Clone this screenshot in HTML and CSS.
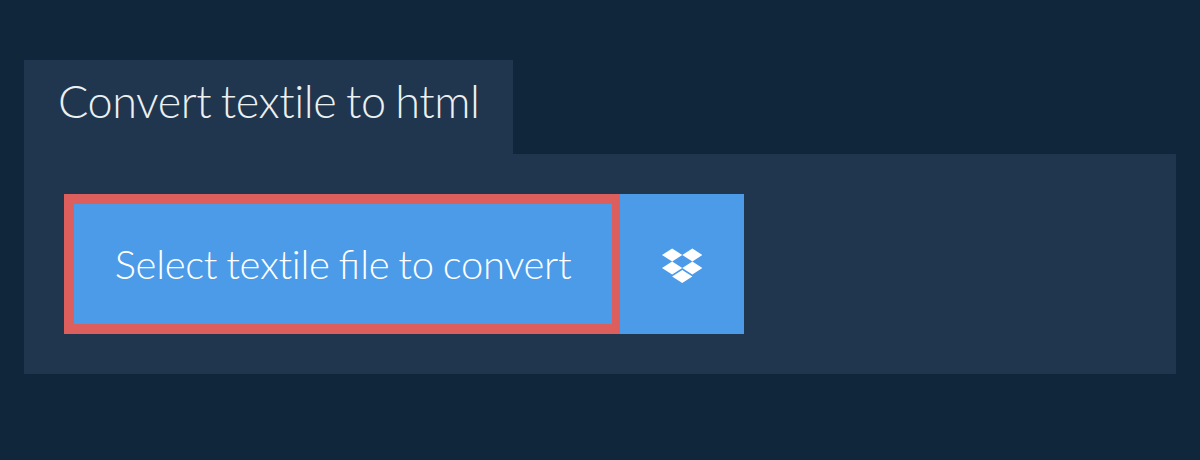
FILE: index.html
```html
<!DOCTYPE html>
<html>
<head>
  <title>Convert textile to html</title>
  <link rel="stylesheet" href="styles.css">
</head>
<body>
  <div class="container">
    <h2 class="tab">Convert textile to html</h2>
    <div class="panel">
      <div class="upload">
        <button class="btn-select">Select textile <span class="ligature">fi</span>le to convert</button>
        <button class="btn-dropbox" aria-label="Dropbox">
          <svg class="dropbox-icon" viewBox="0 0 528 512">
            <path fill="#fff" d="M264.4 116.3l-132 84.3 132 84.3-132 84.3L0 284.1l132.3-84.3L0 116.3 132.3 32l132.1 84.3zM131.6 395.7l132-84.3 132 84.3-132 84.3-132-84.3zm132.8-111.6l132-84.3-132-83.6L395.7 32 528 116.3l-132.3 84.3L528 284.8l-132.3 84.3-131.3-85z"/>
          </svg>
        </button>
      </div>
    </div>
  </div>
</body>
</html>
```

FILE: styles.css
```css
html, body {
  height: 100%;
}

body {
  margin: 0;
  background-color: #10263B;
  font-family: Lato, sans-serif;
  font-weight: 300;
}

.container {
  padding: 60px 24px 0;
}

.tab {
  display: inline-block;
  vertical-align: top;
  width: 489px;
  height: 94px;
  box-sizing: border-box;
  margin: 0;
  padding: 0 0 0 34px;
  background-color: #20364F;
  color: #ECF0F1;
  font-size: 45px;
  font-weight: 300;
  letter-spacing: -0.45px;
  word-spacing: -2px;
  line-height: 83px;
}

.panel {
  padding: 40px;
  background-color: #20364F;
}

.upload {
  display: flex;
}

.btn-select {
  width: 556px;
  height: 140px;
  box-sizing: border-box;
  padding: 0;
  border: 10px solid #DC5F5E;
  border-right-width: 8px;
  background-color: #4C9BE8;
  color: #FFF;
  font-family: Lato, sans-serif;
  font-size: 40px;
  font-weight: 300;
  letter-spacing: -0.3px;
  word-spacing: -1.5px;
}

.ligature {
  letter-spacing: 0;
}

.btn-dropbox {
  display: flex;
  align-items: center;
  justify-content: center;
  width: 124px;
  height: 140px;
  padding: 3px 0 0;
  border: none;
  background-color: #4C9BE8;
}

.dropbox-icon {
  width: 40.5px;
  height: 39.5px;
}
```
